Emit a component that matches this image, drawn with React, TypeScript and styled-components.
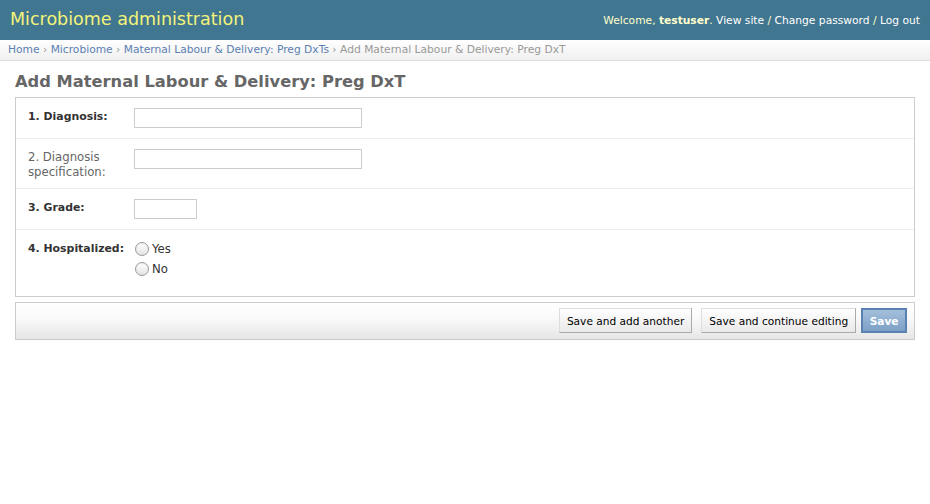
import React from 'react';
import styled, { createGlobalStyle } from 'styled-components';

const GlobalStyle = createGlobalStyle`
    body {
        margin: 0;
        padding: 0;
        background: #fff;
        color: #333;
        font-family: "DejaVu Sans", "Liberation Sans", sans-serif;
        font-size: 11.5px;
    }
    a {
        color: #5b80b2;
        text-decoration: none;
    }
`;

const Header = styled.div`
    display: flex;
    justify-content: space-between;
    align-items: center;
    height: 40px;
    padding: 0 10px;
    background: #417690;
    color: #ffc;
`;

const Branding = styled.h1`
    margin: 0;
    font-size: 17.5px;
    font-weight: normal;
    color: #f4f379;
    padding-bottom: 2px;
`;

const UserTools = styled.div`
    font-size: 10.7px;
    color: #ffc;
    a {
        color: #fff;
    }
    strong {
        font-weight: bold;
    }
`;

const Breadcrumbs = styled.div`
    box-sizing: border-box;
    height: 21px;
    line-height: 19px;
    padding: 0 8px;
    font-size: 10.7px;
    color: #999;
    background: linear-gradient(#ffffff, #f0f0f0);
    border-bottom: 1px solid #ddd;
`;

const Content = styled.div`
    padding: 10px 15px;
`;

const Title = styled.h1`
    margin: 0 0 4px 0;
    font-size: 16.3px;
    font-weight: bold;
    color: #666;
    line-height: 22px;
`;

const Module = styled.fieldset`
    margin: 0 0 5px 0;
    padding: 0;
    border: 1px solid #ccc;
    background: #fff;
`;

const Row = styled.div<{ $height?: number }>`
    display: flex;
    align-items: flex-start;
    padding: 8px 12px;
    border-bottom: 1px solid #eee;
    min-height: ${p => (p.$height ? `${p.$height}px` : 'auto')};
    &:last-child {
        border-bottom: none;
    }
`;

const Label = styled.label<{ $required?: boolean }>`
    width: 96px;
    flex: none;
    padding: 3px 10px 0 0;
    font-size: ${p => (p.$required ? '10.9px' : '11.7px')};
    line-height: 15px;
    white-space: ${p => (p.$required ? 'nowrap' : 'normal')};
    font-weight: ${p => (p.$required ? 'bold' : 'normal')};
    color: ${p => (p.$required ? '#333' : '#666')};
`;

const TextInput = styled.input<{ $width: number }>`
    box-sizing: border-box;
    width: ${p => p.$width}px;
    height: 20px;
    margin: 2px 0;
    padding: 2px 3px;
    border: 1px solid #ccc;
    font-family: inherit;
    font-size: 11px;
`;

const RadioList = styled.ul`
    list-style: none;
    margin: 1px 0 0 0;
    padding: 0;
`;

const RadioItem = styled.li`
    display: flex;
    align-items: center;
    height: 20px;
    font-size: 11.7px;
    color: #333;
`;

const Radio = styled.input`
    appearance: none;
    box-sizing: border-box;
    width: 14px;
    height: 14px;
    margin: 0 3px 0 1px;
    border: 1px solid #9a9a9a;
    border-radius: 50%;
    background: linear-gradient(#ffffff, #e4e4e4);
    box-shadow: inset 0 1px 1px rgba(0, 0, 0, 0.08);
`;

const SubmitRow = styled.div`
    display: flex;
    justify-content: flex-end;
    align-items: center;
    gap: 9px;
    padding: 5px 7px 6px 7px;
    border: 1px solid #ccc;
    background: linear-gradient(#ffffff 0%, #fafafa 40%, #e6e6e6 100%);
`;

const Button = styled.button<{ $default?: boolean }>`
    box-sizing: border-box;
    height: 25px;
    padding: 0 ${p => (p.$default ? '6.5px' : '7px')};
    font-family: inherit;
    font-size: 10.6px;
    color: ${p => (p.$default ? '#fff' : '#000')};
    font-weight: ${p => (p.$default ? 'bold' : 'normal')};
    background: ${p => (p.$default ? 'linear-gradient(#a4bfdc, #7ca0c7)' : 'linear-gradient(#ffffff, #e9e9e9)')};
    border: ${p => (p.$default ? '2px solid #5b80b2' : '1px solid #bbb')};
    border-color: ${p => (p.$default ? '#5b80b2' : '#ddd #aaa #aaa #ddd')};
    margin-left: ${p => (p.$default ? '-4px' : '0')};
`;

export default function App() {
    return (
        <>
            <GlobalStyle />
            <Header>
                <Branding>Microbiome administration</Branding>
                <UserTools>
                    Welcome, <strong>testuser</strong>. <a href="#">View site</a> / <a href="#">Change password</a> / <a href="#">Log out</a>
                </UserTools>
            </Header>
            <Breadcrumbs>
                <a href="#">Home</a> › <a href="#">Microbiome</a> › <a href="#">Maternal Labour &amp; Delivery: Preg DxTs</a> › Add Maternal Labour &amp; Delivery: Preg DxT
            </Breadcrumbs>
            <Content>
                <Title>Add Maternal Labour &amp; Delivery: Preg DxT</Title>
                <Module>
                    <Row>
                        <Label $required>1. Diagnosis:</Label>
                        <TextInput $width={228} />
                    </Row>
                    <Row>
                        <Label>2. Diagnosis specification:</Label>
                        <TextInput $width={228} />
                    </Row>
                    <Row>
                        <Label $required>3. Grade:</Label>
                        <TextInput $width={63} />
                    </Row>
                    <Row $height={50}>
                        <Label $required>4. Hospitalized:</Label>
                        <RadioList>
                            <RadioItem><Radio type="radio" name="hosp" />Yes</RadioItem>
                            <RadioItem><Radio type="radio" name="hosp" />No</RadioItem>
                        </RadioList>
                    </Row>
                </Module>
                <SubmitRow>
                    <Button>Save and add another</Button>
                    <Button>Save and continue editing</Button>
                    <Button $default>Save</Button>
                </SubmitRow>
            </Content>
        </>
    );
}
